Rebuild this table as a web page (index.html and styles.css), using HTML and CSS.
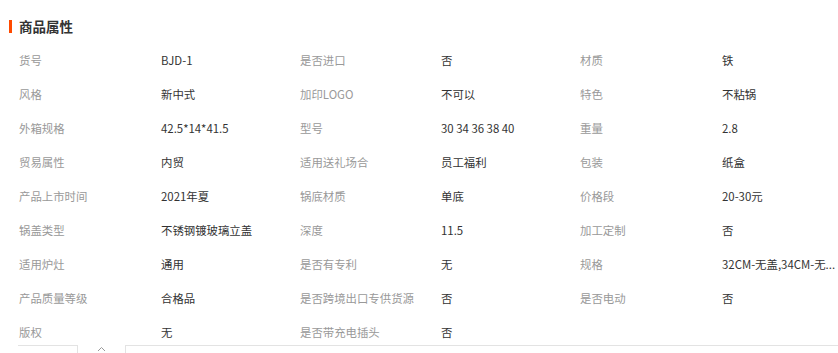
FILE: index.html
```html
<!DOCTYPE html>
<html lang="zh-CN">
<head>
<meta charset="utf-8">
<title>商品属性</title>
<link rel="stylesheet" href="styles.css">
</head>
<body>
<div class="panel">
  <div class="title"><span class="bar"></span><h2>商品属性</h2></div>
  <div class="attrs">
    <span class="k">货号</span><span class="v">BJD-1</span>
    <span class="k">是否进口</span><span class="v">否</span>
    <span class="k">材质</span><span class="v">铁</span>

    <span class="k">风格</span><span class="v">新中式</span>
    <span class="k">加印LOGO</span><span class="v">不可以</span>
    <span class="k">特色</span><span class="v">不粘锅</span>

    <span class="k">外箱规格</span><span class="v">42.5*14*41.5</span>
    <span class="k">型号</span><span class="v">30 34 36 38 40</span>
    <span class="k">重量</span><span class="v">2.8</span>

    <span class="k">贸易属性</span><span class="v">内贸</span>
    <span class="k">适用送礼场合</span><span class="v">员工福利</span>
    <span class="k">包装</span><span class="v">纸盒</span>

    <span class="k">产品上市时间</span><span class="v">2021年夏</span>
    <span class="k">锅底材质</span><span class="v">单底</span>
    <span class="k">价格段</span><span class="v">20-30元</span>

    <span class="k">锅盖类型</span><span class="v">不锈钢镀玻璃立盖</span>
    <span class="k">深度</span><span class="v">11.5</span>
    <span class="k">加工定制</span><span class="v">否</span>

    <span class="k">适用炉灶</span><span class="v">通用</span>
    <span class="k">是否有专利</span><span class="v">无</span>
    <span class="k">规格</span><span class="v">32CM-无盖,34CM-无...</span>

    <span class="k">产品质量等级</span><span class="v">合格品</span>
    <span class="k">是否跨境出口专供货源</span><span class="v">否</span>
    <span class="k">是否电动</span><span class="v">否</span>

    <span class="k">版权</span><span class="v">无</span>
    <span class="k">是否带充电插头</span><span class="v">否</span>
  </div>
  <div class="foot">
    <div class="foot-left"></div>
    <div class="foot-toggle"><svg width="9" height="6" viewBox="0 0 9 6"><polyline points="1,5 4.5,1.5 8,5" fill="none" stroke="#999" stroke-width="1"/></svg></div>
    <div class="foot-right"></div>
  </div>
</div>
</body>
</html>
```
FILE: styles.css
```css
html, body {
  margin: 0;
  padding: 0;
  background: #fff;
  overflow: hidden;
}
body {
  font-family: "Noto Sans CJK SC", "Noto Sans", sans-serif;
  width: 838px;
  height: 353px;
}
.panel {
  padding-top: 19px;
}
.title {
  display: flex;
  align-items: center;
  height: 14px;
  margin-left: 9px;
  gap: 7px;
}
.bar {
  width: 3px;
  height: 13px;
  background: #ff4a00;
}
.title h2 {
  margin: 0;
  font-size: 13.5px;
  line-height: 14px;
  font-weight: bold;
  color: #333;
}
.attrs {
  display: grid;
  grid-template-columns: 142px 139px 141px 139px 142px 116px;
  row-gap: 14px;
  margin-top: 17px;
  padding-left: 19px;
  font-size: 11.4px;
  line-height: 20px;
}
.k {
  color: #999;
  white-space: nowrap;
}
.v {
  color: #333;
  white-space: nowrap;
}
.foot {
  display: flex;
  align-items: flex-start;
  margin-top: 3px;
  height: 20px;
}
.foot-left {
  margin-left: 18px;
  width: 59px;
  height: 20px;
  border-top: 1px solid #e3e3e3;
  border-right: 1px solid #e3e3e3;
}
.foot-toggle {
  width: 47px;
  display: flex;
  justify-content: center;
  padding-top: 1px;
}
.foot-right {
  flex: 1;
  height: 20px;
  border-top: 1px solid #e3e3e3;
  border-left: 1px solid #e3e3e3;
}
```
